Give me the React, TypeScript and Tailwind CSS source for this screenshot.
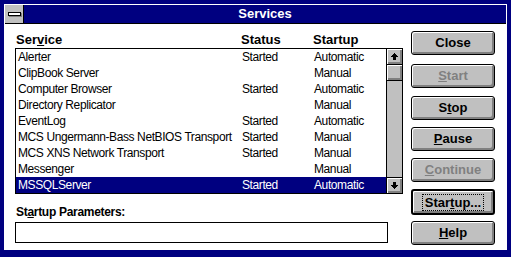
import React from "react";

const rows: [string, string, string][] = [
  ["Alerter", "Started", "Automatic"],
  ["ClipBook Server", "", "Manual"],
  ["Computer Browser", "Started", "Automatic"],
  ["Directory Replicator", "", "Manual"],
  ["EventLog", "Started", "Automatic"],
  ["MCS Ungermann-Bass NetBIOS Transport", "Started", "Manual"],
  ["MCS XNS Network Transport", "Started", "Manual"],
  ["Messenger", "", "Manual"],
  ["MSSQLServer", "Started", "Automatic"],
];

const bevel =
  "shadow-[inset_1px_1px_0_#ffffff,inset_-1px_-1px_0_#808080,inset_-2px_-2px_0_#808080]";

function Arrow({ down }: { down?: boolean }) {
  // pixel arrow, drawn upright and flipped for the down button
  return (
    <svg
      width="7"
      height="7"
      viewBox="0 0 7 7"
      shapeRendering="crispEdges"
      className={down ? "rotate-180" : ""}
    >
      <rect x="3" y="0" width="1" height="1" fill="#000" />
      <rect x="2" y="1" width="3" height="1" fill="#000" />
      <rect x="1" y="2" width="5" height="1" fill="#000" />
      <rect x="0" y="3" width="7" height="1" fill="#000" />
      <rect x="2" y="4" width="3" height="3" fill="#000" />
    </svg>
  );
}

function Button({
  children,
  disabled,
  isDefault,
  className = "",
}: {
  children: React.ReactNode;
  disabled?: boolean;
  isDefault?: boolean;
  className?: string;
}) {
  return (
    <div
      className={`flex w-[84px] items-center justify-center rounded-[3px] border-black bg-[#c0c0c0] text-[13px] font-bold ${bevel} ${
        isDefault ? "h-[26px] border-2" : "h-[24px] border"
      } ${disabled ? "text-[#808080]" : "text-black"} ${className}`}
    >
      {children}
    </div>
  );
}

export default function App() {
  return (
    <div className="h-[257px] w-[511px] bg-[#000080] px-[4px] pt-[4px] pb-[7px] font-['Liberation_Sans',Arial,sans-serif] leading-[16px]">
      <div className="flex h-full flex-col border border-white">
        {/* title bar */}
        <div className="flex h-[19px] shrink-0 border-b border-black bg-[#000080]">
          <div className="flex w-[19px] items-center justify-center border-r border-black bg-[#c0c0c0]">
            <div className="h-[4px] w-[13px] border border-black bg-white shadow-[1px_1px_0_#808080]" />
          </div>
          <div className="flex flex-1 items-center justify-center text-[13px] font-bold text-white">
            Services
          </div>
        </div>

        {/* body */}
        <div className="flex flex-1 bg-white pt-[8px] pl-[10px]">
          <div className="flex w-[388px] flex-col">
            <div className="grid h-[16px] grid-cols-[225px_72px_1fr] pl-[1px] text-[13px] font-bold text-black">
              <span>
                Ser<u className="underline-offset-[1px]">v</u>ice
              </span>
              <span>Status</span>
              <span>Startup</span>
            </div>
            <div className="flex h-[146px] border border-black">
              <div className="flex flex-1 flex-col">
                {rows.map(([name, status, startup], i) => {
                  const sel = i === rows.length - 1;
                  return (
                    <div
                      key={name}
                      className={`grid h-[16px] grid-cols-[224px_72px_1fr] pl-[2px] text-[12px] tracking-[-0.4px] ${
                        sel ? "bg-[#000080] text-white" : "text-black"
                      }`}
                    >
                      <span className="whitespace-nowrap">{name}</span>
                      <span>{status}</span>
                      <span>{startup}</span>
                    </div>
                  );
                })}
              </div>
              <div className="flex w-[16px] flex-col border-l border-black bg-[#c0c0c0]">
                <div className={`flex h-[16px] items-center justify-center border-b border-black ${bevel}`}>
                  <Arrow />
                </div>
                <div className={`h-[16px] border-b border-black ${bevel}`} />
                <div className="flex-1" />
                <div className={`flex h-[16px] items-center justify-center border-t border-black ${bevel}`}>
                  <Arrow down />
                </div>
              </div>
            </div>

            <div className="mt-[10px] h-[16px] pl-[1px] text-[12px] font-bold tracking-[-0.3px] text-black">
              St<u className="underline-offset-[1px]">a</u>rtup Parameters:
            </div>
            <div className="mt-[2px] h-[21px] w-[373px] border border-black bg-white" />
          </div>

          <div className="ml-[8px] -mt-[1px] flex flex-col">
            <Button>Close</Button>
            <Button disabled className="mt-[9px]">
              <u>S</u>tart
            </Button>
            <Button className="mt-[8px]">
              S<u>t</u>op
            </Button>
            <Button className="mt-[7px]">
              <u>P</u>ause
            </Button>
            <Button disabled className="mt-[7px]">
              <u>C</u>ontinue
            </Button>
            <Button isDefault className="mt-[7px]">
              <span className="border border-dotted border-black px-[2px] leading-[15px]">
                Star<u>t</u>up...
              </span>
            </Button>
            <Button className="mt-[6px]">
              <u>H</u>elp
            </Button>
          </div>
        </div>
      </div>
    </div>
  );
}
